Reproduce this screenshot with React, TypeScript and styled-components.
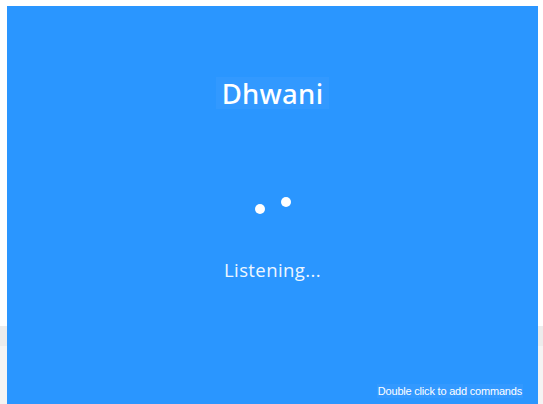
import React from "react";
import styled, { createGlobalStyle } from "styled-components";

const Global = createGlobalStyle`
  html, body { margin: 0; padding: 0; background: #ffffff; overflow: hidden; }
  #root { width: 543px; height: 404px; }
`;

const Page = styled.div`
  width: 543px;
  height: 404px;
  display: flex;
  background: linear-gradient(to bottom, #ffffff 0, #ffffff 326px, #ececec 326px, #ececec 346px, #f4f4f4 346px, #f4f4f4 100%);
  padding: 6px 5px 0 7px;
  box-sizing: border-box;
`;

const Panel = styled.main`
  flex: 1;
  background: #2a96ff;
  display: flex;
  flex-direction: column;
  align-items: center;
  padding-top: 71px;
  padding-bottom: 6px;
  box-sizing: border-box;
`;

const Title = styled.h1`
  margin: 0;
  height: 32px;
  padding: 0 6px;
  display: flex;
  align-items: center;
  background: #3299ff;
  color: #ffffff;
  font-family: "Noto Sans", "Open Sans", sans-serif;
  font-weight: 500;
  font-size: 27.5px;
  letter-spacing: 0.3px;
`;

const Spinner = styled.svg`
  margin-top: 86px;
  display: block;
`;

const Status = styled.div`
  margin-top: 45px;
  color: #eef6ff;
  font-family: "Open Sans", "Lato", sans-serif;
  font-size: 18.5px;
  line-height: 20px;
  letter-spacing: 0.4px;
`;

const Spacer = styled.div`
  flex: 1;
`;

const Footer = styled.div`
  align-self: flex-end;
  margin-right: 15px;
  padding: 0 1px;
  background: #3399ff;
  color: #ffffff;
  font-family: "Liberation Sans", Arial, sans-serif;
  font-size: 11px;
  letter-spacing: -0.2px;
  line-height: 14px;
`;

export default function App() {
  return (
    <>
      <Global />
      <Page>
        <Panel>
          <Title>Dhwani</Title>
          <Spinner width="40" height="20" viewBox="0 0 40 20">
            <circle cx="7" cy="14" r="5" fill="#ffffff" />
            <circle cx="33" cy="7" r="5" fill="#ffffff" />
          </Spinner>
          <Status>Listening...</Status>
          <Spacer />
          <Footer>Double click to add commands</Footer>
        </Panel>
      </Page>
    </>
  );
}
